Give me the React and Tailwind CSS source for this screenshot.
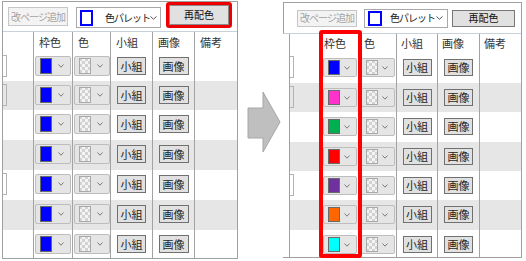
import React from "react";

const FONT = "font-['Noto_Sans_CJK_JP','Noto_Sans',sans-serif]";

function Chevron({ w = 6, h = 4, color = "#7a7a7a" }) {
  return (
    <svg width={w} height={h} viewBox={`0 0 ${w} ${h}`} className="block">
      <polyline points={`0.5,0.5 ${w / 2},${h - 0.8} ${w - 0.5},0.5`} fill="none" stroke={color} strokeWidth="1" />
    </svg>
  );
}

function Checker({ w = 12, h = 16 }) {
  const cells = [];
  for (let y = 0; y < h; y += 3) {
    for (let x = 0; x < w; x += 3) {
      if (((x + y) / 3) % 2 === 0) cells.push(<rect key={`${x}-${y}`} x={x} y={y} width="3" height="3" fill="#d2d2d2" />);
    }
  }
  return (
    <svg width={w} height={h} viewBox={`0 0 ${w} ${h}`} className="block">
      <rect width={w} height={h} fill="#f4f4f4" />
      {cells}
      <rect x="0.5" y="0.5" width={w - 1} height={h - 1} fill="none" stroke="#a9a9a9" />
    </svg>
  );
}

function Dropdown({ cfg, swatch }) {
  return (
    <div className={`${cfg.ddW} ${cfg.ddH} flex items-center border border-[#bdbdbd] bg-[#e5e5e5] rounded-[2px] pl-[4px]`}>
      {swatch ? (
        <div className={`w-[12px] ${cfg.swH} border border-[#6a6a6a] ${swatch}`} />
      ) : (
        <Checker w={12} h={cfg.chkH} />
      )}
      <div className="ml-auto mr-[6px]">
        <Chevron />
      </div>
    </div>
  );
}

function Btn({ cfg, label, w }) {
  return (
    <div className={`${w} ${cfg.btnH} flex items-center justify-center border border-[#707070] bg-[#e1e1e1] text-[11px] leading-none text-[#1e1e1e] whitespace-nowrap`}>
      {label}
    </div>
  );
}

function Row({ cfg, h, gray, swatch, edge }) {
  const c = cfg.cols;
  const line = "border-r border-[#a3a3a3] shrink-0";
  return (
    <div className={`flex ${h} ${gray ? "bg-[#e6e6e6]" : "bg-white"}`}>
      <div className={`${c[0]} ${line} flex items-start`}>
        {edge && <div className="mt-[3px] h-[22px] w-[4px] border border-l-0 border-[#b3b3b3]" />}
      </div>
      <div className={`${c[1]} ${line} flex justify-center ${cfg.ddPt}`}>
        <Dropdown cfg={cfg} swatch={swatch} />
      </div>
      <div className={`${c[2]} ${line} flex justify-center ${cfg.ddPt}`}>
        <Dropdown cfg={cfg} />
      </div>
      <div className={`${c[3]} ${line} flex justify-center ${cfg.btnPt}`}>
        <Btn cfg={cfg} label="小組" w={cfg.btnW1} />
      </div>
      <div className={`${c[4]} ${line} flex justify-center ${cfg.btnPt}`}>
        <Btn cfg={cfg} label="画像" w={cfg.btnW2} />
      </div>
      <div className="flex-1" />
    </div>
  );
}

function Header({ cfg }) {
  const c = cfg.cols;
  const line = "border-r border-[#a3a3a3] shrink-0";
  const t = `flex items-center ${cfg.hPl} text-[11px] text-[#333] whitespace-nowrap`;
  return (
    <div className={`flex ${cfg.headH} bg-white`}>
      <div className={`${c[0]} ${line}`} />
      <div className={`${c[1]} ${line} ${t}`}>枠色</div>
      <div className={`${c[2]} ${line} ${t}`}>色</div>
      <div className={`${c[3]} ${line} ${t}`}>小組</div>
      <div className={`${c[4]} ${line} ${t}`}>画像</div>
      <div className={`flex-1 ${t}`}>備考</div>
    </div>
  );
}

function Rows({ cfg, swatches }) {
  return (
    <>
      {cfg.rowH.map((h, i) => (
        <Row key={i} cfg={cfg} h={h} gray={i % 2 === 1} swatch={swatches[i]} edge={i === 0 || i === 1 || i === 4} />
      ))}
    </>
  );
}

function SelectBox({ w, h, sq, gapText }) {
  return (
    <div className={`${w} ${h} flex items-center border border-[#a8a8a8] bg-white pl-[3px]`}>
      <div className={`${sq} shrink-0 border-2 border-[#0000ff] bg-white`} />
      <span className={`${gapText} text-[10px] leading-none text-[#222] whitespace-nowrap tracking-[-1px]`}>色パレット</span>
      <div className="ml-auto mr-[4px] shrink-0">
        <Chevron w={7} h={4} color="#555" />
      </div>
    </div>
  );
}

const leftCfg = {
  cols: ["w-[31px]", "w-[39px]", "w-[38px]", "w-[42px]", "w-[42px]"],
  rowH: ["h-[29px]", "h-[29px]", "h-[30px]", "h-[30px]", "h-[30px]", "h-[30px]", "h-[28px]"],
  headH: "h-[20px]",
  hPl: "pl-[5px]",
  ddW: "w-[36px]",
  ddH: "h-[20px]",
  swH: "h-[16px]",
  chkH: 16,
  ddPt: "pt-[4px]",
  btnPt: "pt-[5px]",
  btnH: "h-[18px]",
  btnW1: "w-[29px]",
  btnW2: "w-[30px]",
};

const rightCfg = {
  cols: ["w-[30px]", "w-[40px]", "w-[37px]", "w-[41px]", "w-[42px]"],
  rowH: ["h-[30px]", "h-[29px]", "h-[30px]", "h-[29px]", "h-[29px]", "h-[30px]", "h-[27px]"],
  headH: "h-[19px]",
  hPl: "pl-[4px]",
  ddW: "w-[34px]",
  ddH: "h-[19px]",
  swH: "h-[15px]",
  chkH: 15,
  ddPt: "pt-[5px]",
  btnPt: "pt-[6px]",
  btnH: "h-[17px]",
  btnW1: "w-[29px]",
  btnW2: "w-[29px]",
};

const blue = Array(7).fill("bg-[#0000ff]");
const recolored = [
  "bg-[#0000ff]",
  "bg-[#ff33cc]",
  "bg-[#00b050]",
  "bg-[#ff0000]",
  "bg-[#7030a0]",
  "bg-[#ff6600]",
  "bg-[#00ffff]",
];

const addPage =
  "w-[60px] flex items-center justify-center border border-[#c6c6c6] bg-[#f3f3f3] text-[10px] leading-none text-[#a3a3a3] whitespace-nowrap tracking-[-1px]";

function LeftPanel() {
  return (
    <div className="mt-[1px] ml-[2px] w-[236px] shrink-0 border border-[#a0a0a0] bg-white">
      <div className="h-[30px] border-b border-[#c8d0da] flex items-start">
        <div className={`ml-[5px] mt-[5px] h-[19px] ${addPage}`}>改ページ追加</div>
        <div className="ml-[8px] mt-[5px]">
          <SelectBox w="w-[85px]" h="h-[21px]" sq="w-[13px] h-[16px]" gapText="ml-[12px]" />
        </div>
        <div className="ml-[5px] mt-0 w-[66px] h-[26px] border-[3px] border-[#ee0000] rounded-[3px] flex">
          <div className="flex-1 flex items-center justify-center border border-[#8a8a8a] bg-[#e1e1e1] text-[10px] leading-none text-[#111] whitespace-nowrap">
            再配色
          </div>
        </div>
      </div>
      <Header cfg={leftCfg} />
      <Rows cfg={leftCfg} swatches={blue} />
    </div>
  );
}

function RightPanel() {
  return (
    <div className="relative mt-[2px] ml-[1px] w-[239px] shrink-0 border-t border-r border-b border-[#a0a0a0] bg-white">
      <div className="h-[31px] border-l border-l-[#a0a0a0] border-b border-b-[#c8d0da] flex items-center">
        <div className={`ml-[13px] h-[17px] ${addPage}`}>改ページ追加</div>
        <div className="ml-[7px]">
          <SelectBox w="w-[84px]" h="h-[19px]" sq="w-[14px] h-[15px]" gapText="ml-[8px]" />
        </div>
        <div className="ml-[4px] w-[63px] h-[17px] flex items-center justify-center border border-[#777] bg-[#e1e1e1] text-[10px] leading-none text-[#111] whitespace-nowrap">
          再配色
        </div>
      </div>
      <div className="ml-[6px] border-l border-[#a0a0a0]">
        <Header cfg={rightCfg} />
        <Rows cfg={rightCfg} swatches={recolored} />
      </div>
      <div className="absolute left-[36px] top-[27px] w-[43px] h-[228px] border-4 border-[#ff0000] rounded-[3px]" />
    </div>
  );
}

function Arrow() {
  return (
    <svg width="36" height="64" viewBox="0 0 36 64" className="mt-[90px] ml-[8px] shrink-0 block">
      <polygon points="2,18 17,18 17,2 34,32 17,62 17,48 2,48" fill="#bfbfbf" stroke="#a6a6a6" strokeWidth="1" />
    </svg>
  );
}

export default function App() {
  return (
    <div className={`w-[526px] h-[261px] bg-white flex items-start overflow-hidden ${FONT}`}>
      <LeftPanel />
      <Arrow />
      <RightPanel />
    </div>
  );
}
